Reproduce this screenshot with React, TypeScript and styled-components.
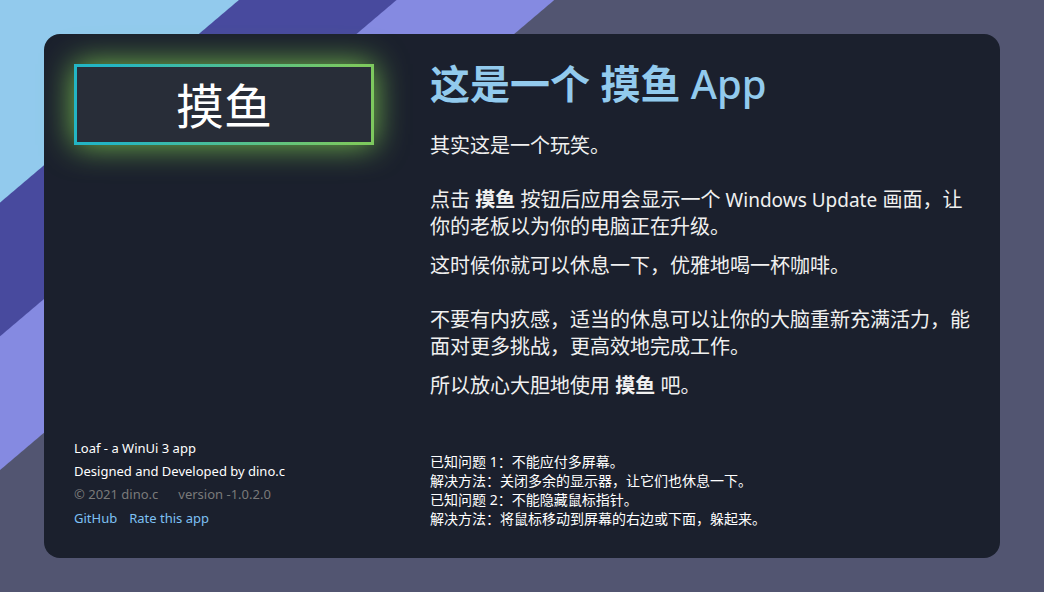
import React from 'react';
import styled, { createGlobalStyle } from 'styled-components';

const GlobalStyle = createGlobalStyle`
  * {
    box-sizing: border-box;
  }

  body {
    margin: 0;
    font-family: 'Noto Sans', 'Noto Sans CJK SC', sans-serif;
    color: #ffffff;
  }
`;

const Page = styled.div`
  display: flex;
  min-height: 100vh;
  padding: 34px 44px;
  background: linear-gradient(
    139.7deg,
    #92caed 154px,
    #484a9e 155px,
    #484a9e 256px,
    #858ae1 257px,
    #858ae1 358px,
    #525571 359px
  );
`;

const Card = styled.main`
  flex: 1;
  display: grid;
  grid-template-columns: 300px 1fr;
  gap: 56px;
  padding: 30px;
  border-radius: 16px;
  background: #1b202d;
`;

const Column = styled.section`
  display: flex;
  flex-direction: column;
  justify-content: space-between;
  min-width: 0;
`;

const LoafButton = styled.button`
  height: 81px;
  padding: 3px 0 0;
  border: 3px solid transparent;
  background:
    linear-gradient(#282d38, #282d38) padding-box,
    linear-gradient(90deg, #23b5c4 12%, #7dc95e 94%) border-box;
  box-shadow: 0 0 32px rgba(125, 201, 80, 0.95);
  color: #ffffff;
  font-family: inherit;
  font-size: 48px;
  line-height: 72px;
  cursor: pointer;
`;

const About = styled.footer`
  font-size: 13px;
  line-height: 23px;
`;

const AboutLine = styled.p<{ $muted?: boolean }>`
  display: flex;
  gap: 20px;
  margin: 0;
  color: ${({ $muted }) => ($muted ? '#7a7a7a' : '#ffffff')};
`;

const Links = styled.nav`
  display: flex;
  gap: 12px;
  margin-top: 2px;
  line-height: 20px;
`;

const Link = styled.a`
  color: #7ec0f4;
  text-decoration: none;
`;

const Title = styled.h1`
  margin: 0 0 28px;
  color: #92caed;
  font-size: 40px;
  font-weight: 700;
  line-height: 40px;
`;

const TitleLatin = styled.span`
  font-weight: 500;
`;

const Intro = styled.div`
  display: flex;
  flex-direction: column;
  gap: 27px;
  color: #f0f0f0;
  font-size: 20px;
  line-height: 27px;
`;

const Passage = styled.div`
  display: flex;
  flex-direction: column;
  gap: 12px;
`;

const Paragraph = styled.p`
  margin: 0;
`;

const ProductName = styled.span`
  font-size: 19px;
  line-height: 1;
`;

const Issues = styled.div`
  font-size: 14px;
  line-height: 19px;
`;

export default function App() {
  return (
    <>
      <GlobalStyle />
      <Page>
        <Card>
          <Column>
            <LoafButton type="button">摸鱼</LoafButton>
            <About>
              <AboutLine>Loaf - a WinUi 3 app</AboutLine>
              <AboutLine>Designed and Developed by dino.c</AboutLine>
              <AboutLine $muted>
                <span>© 2021 dino.c</span>
                <span>version -1.0.2.0</span>
              </AboutLine>
              <Links>
                <Link href="#github">GitHub</Link>
                <Link href="#rate">Rate this app</Link>
              </Links>
            </About>
          </Column>
          <Column lang="zh-CN">
            <div>
              <Title>
                这是一个 摸鱼 <TitleLatin>App</TitleLatin>
              </Title>
              <Intro>
                <Paragraph>其实这是一个玩笑。</Paragraph>
                <Passage>
                  <Paragraph>
                    点击 <strong>摸鱼</strong> 按钮后应用会显示一个 <ProductName>Windows Update</ProductName>{' '}
                    画面，让你的老板以为你的电脑正在升级。
                  </Paragraph>
                  <Paragraph>这时候你就可以休息一下，优雅地喝一杯咖啡。</Paragraph>
                </Passage>
                <Passage>
                  <Paragraph>
                    不要有内疚感，适当的休息可以让你的大脑重新充满活力，能面对更多挑战，更高效地完成工作。
                  </Paragraph>
                  <Paragraph>
                    所以放心大胆地使用 <strong>摸鱼</strong> 吧。
                  </Paragraph>
                </Passage>
              </Intro>
            </div>
            <Issues>
              <Paragraph>已知问题 1：不能应付多屏幕。</Paragraph>
              <Paragraph>解决方法：关闭多余的显示器，让它们也休息一下。</Paragraph>
              <Paragraph>已知问题 2：不能隐藏鼠标指针。</Paragraph>
              <Paragraph>解决方法：将鼠标移动到屏幕的右边或下面，躲起来。</Paragraph>
            </Issues>
          </Column>
        </Card>
      </Page>
    </>
  );
}
